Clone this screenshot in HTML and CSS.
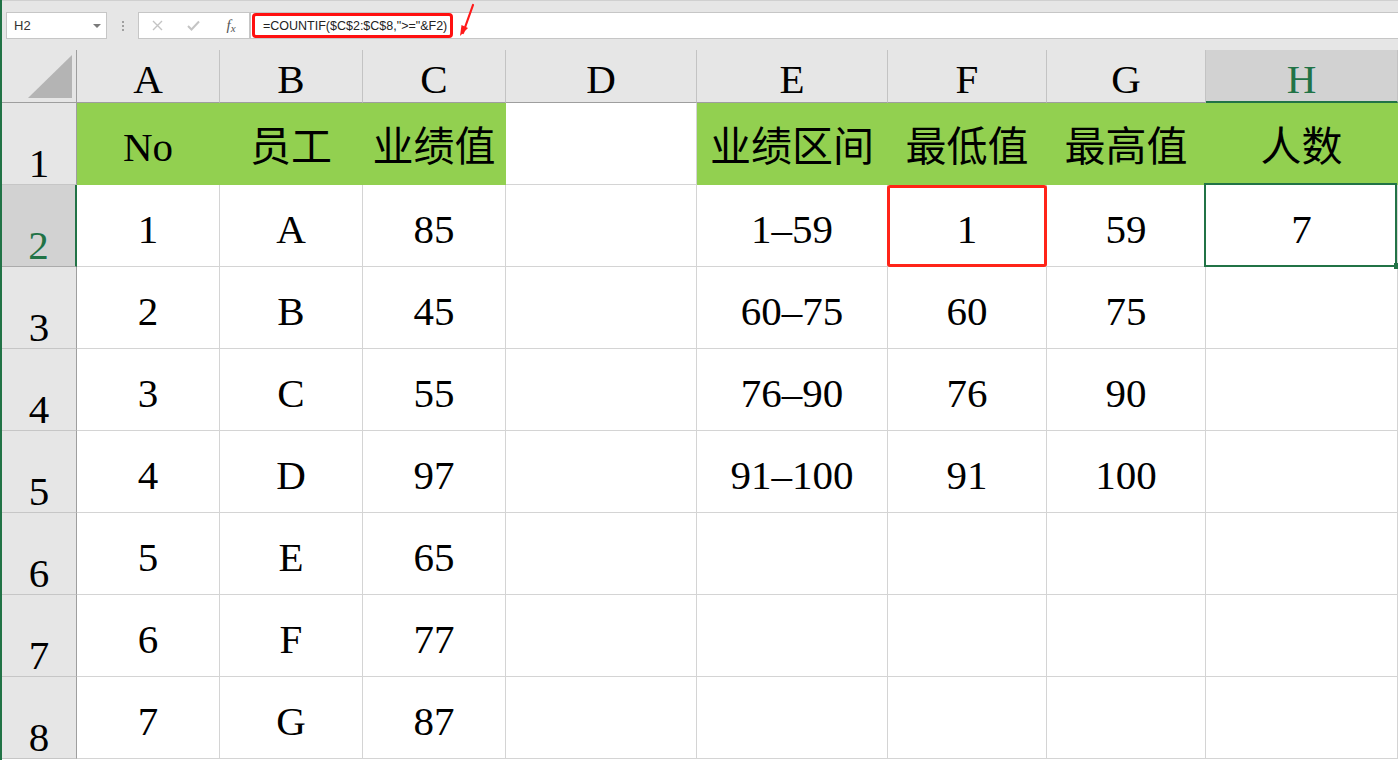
FILE: index.html
```html
<!DOCTYPE html>
<html lang="zh-CN">
<head>
    <meta charset="UTF-8">
    <title>COUNTIF 统计</title>
    <link rel="stylesheet" href="styles.css">
</head>
<body>
<div class="window">

    <div class="toolbar">
        <div class="namebox">H2<span class="caret"></span></div>
        <div class="grip"><i></i><i></i><i></i></div>
        <div class="fbtns">
            <span class="fbtn">
                <svg width="11" height="11" viewBox="0 0 11 11"><path d="M1 1 L10 10 M10 1 L1 10" stroke="#c4c4c4" stroke-width="1.4" fill="none"/></svg>
            </span>
            <span class="fbtn">
                <svg width="13" height="11" viewBox="0 0 13 11"><path d="M1 6 L4.5 9.5 L12 1.5" stroke="#c4c4c4" stroke-width="2" fill="none"/></svg>
            </span>
            <span class="fbtn fx"><i>f</i><i class="sub">x</i></span>
        </div>
        <div class="fbar">
            <span class="formula">=COUNTIF($C$2:$C$8,"&gt;="&amp;F2)</span>
        </div>
        <svg class="arrow" width="22" height="36" viewBox="0 0 22 36">
            <path d="M15 2 L5 30" stroke="#ff1a1a" stroke-width="2.2" fill="none" stroke-linecap="round"/>
            <path d="M2 33 L3.5 22 L10 25 Z" fill="#ff1a1a"/>
        </svg>
    </div>

    <div class="sheet">
        <!-- column headers -->
        <div class="corner"><div class="tri"></div></div>
        <div class="ch">A</div>
        <div class="ch">B</div>
        <div class="ch">C</div>
        <div class="ch">D</div>
        <div class="ch">E</div>
        <div class="ch">F</div>
        <div class="ch">G</div>
        <div class="ch sel">H</div>

        <!-- row 1 -->
        <div class="rh">1</div>
        <div class="c fill">No</div>
        <div class="c fill">员工</div>
        <div class="c fill">业绩值</div>
        <div class="c"></div>
        <div class="c fill">业绩区间</div>
        <div class="c fill">最低值</div>
        <div class="c fill">最高值</div>
        <div class="c fill">人数</div>

        <!-- row 2 -->
        <div class="rh sel">2</div>
        <div class="c">1</div>
        <div class="c">A</div>
        <div class="c">85</div>
        <div class="c"></div>
        <div class="c">1–59</div>
        <div class="c mark">1</div>
        <div class="c">59</div>
        <div class="c active">7</div>

        <!-- row 3 -->
        <div class="rh">3</div>
        <div class="c">2</div>
        <div class="c">B</div>
        <div class="c">45</div>
        <div class="c"></div>
        <div class="c">60–75</div>
        <div class="c">60</div>
        <div class="c">75</div>
        <div class="c"></div>

        <!-- row 4 -->
        <div class="rh">4</div>
        <div class="c">3</div>
        <div class="c">C</div>
        <div class="c">55</div>
        <div class="c"></div>
        <div class="c">76–90</div>
        <div class="c">76</div>
        <div class="c">90</div>
        <div class="c"></div>

        <!-- row 5 -->
        <div class="rh">5</div>
        <div class="c">4</div>
        <div class="c">D</div>
        <div class="c">97</div>
        <div class="c"></div>
        <div class="c">91–100</div>
        <div class="c">91</div>
        <div class="c">100</div>
        <div class="c"></div>

        <!-- row 6 -->
        <div class="rh">6</div>
        <div class="c">5</div>
        <div class="c">E</div>
        <div class="c">65</div>
        <div class="c"></div>
        <div class="c"></div>
        <div class="c"></div>
        <div class="c"></div>
        <div class="c"></div>

        <!-- row 7 -->
        <div class="rh">7</div>
        <div class="c">6</div>
        <div class="c">F</div>
        <div class="c">77</div>
        <div class="c"></div>
        <div class="c"></div>
        <div class="c"></div>
        <div class="c"></div>
        <div class="c"></div>

        <!-- row 8 -->
        <div class="rh">8</div>
        <div class="c">7</div>
        <div class="c">G</div>
        <div class="c">87</div>
        <div class="c"></div>
        <div class="c"></div>
        <div class="c"></div>
        <div class="c"></div>
        <div class="c"></div>
    </div>

</div>
</body>
</html>
```

FILE: styles.css
```css
:root {
    --excel-green: #217346;
    --fill: #92d050;
    --grid: #d4d4d4;
    --head-bg: #e6e6e6;
    --head-sel: #d2d2d2;
    --head-line: #9e9e9e;
}

body {
    margin: 0;
    background: #fff;
    overflow: hidden;
    font-family: "Liberation Serif", "Noto Sans CJK SC", serif;
    color: #000;
}

.window {
    height: 760px;
    border-left: 2px solid var(--excel-green);
    box-sizing: border-box;
    overflow: hidden;
}

/* formula bar */
.toolbar {
    position: relative;
    height: 50px;
    box-sizing: border-box;
    background: var(--head-bg);
    border-top: 1px solid #d0d0d0;
    padding: 11px 0 0 4px;
    display: flex;
    align-items: flex-start;
    font-family: "Liberation Sans", "Noto Sans CJK SC", sans-serif;
}

.namebox {
    width: 101px;
    height: 27px;
    box-sizing: border-box;
    background: #fff;
    border: 1px solid #c6c6c6;
    display: flex;
    align-items: center;
    padding: 0 5px 0 7px;
    font-size: 13px;
    color: #333;
}

.caret {
    margin-left: auto;
    border-left: 4px solid transparent;
    border-right: 4px solid transparent;
    border-top: 4px solid #7a7a7a;
}

.grip {
    width: 31px;
    height: 27px;
    display: flex;
    flex-direction: column;
    align-items: center;
    justify-content: center;
    gap: 2px;
}

.grip i {
    width: 2px;
    height: 2px;
    background: #a0a0a0;
}

.fbtns {
    width: 112px;
    height: 27px;
    box-sizing: border-box;
    background: #fff;
    border: 1px solid #c6c6c6;
    display: flex;
}

.fbtn {
    width: 36px;
    display: flex;
    align-items: center;
    justify-content: center;
}

.fx {
    font-family: "Liberation Serif", serif;
    font-size: 15px;
    color: #555;
    padding-left: 2px;
}

.fx .sub {
    font-size: 11px;
    margin-top: 5px;
}

.fbar {
    flex: 1;
    height: 27px;
    box-sizing: border-box;
    background: #fff;
    border: 1px solid #c6c6c6;
    border-right: none;
}

.formula {
    display: inline-flex;
    align-items: center;
    height: 25px;
    box-sizing: border-box;
    margin-left: 1px;
    padding: 0 3px 0 8px;
    border: 3px solid #ff1010;
    border-radius: 4px;
    font-size: 12.5px;
    color: #222;
}

.arrow {
    position: absolute;
    left: 456px;
    top: 2px;
}

/* grid */
.sheet {
    display: grid;
    grid-template-columns: 75px 143px 143px 143px 191px 191px 159px 159px 1fr;
    grid-template-rows: 53px;
    grid-auto-rows: 82px;
}

.corner,
.ch,
.rh,
.c {
    box-sizing: border-box;
    display: flex;
    justify-content: center;
    align-items: flex-end;
    font-size: 41px;
    line-height: 1;
}

.corner {
    background: var(--head-bg);
    border-right: 1px solid var(--head-line);
    border-bottom: 1px solid var(--head-line);
    justify-content: flex-end;
    padding: 0 4px 4px 0;
}

.tri {
    width: 44px;
    height: 43px;
    background: #b4b4b4;
    clip-path: polygon(100% 0, 100% 100%, 0 100%);
}

.ch {
    background: var(--head-bg);
    border-right: 1px solid #c3c3c3;
    border-bottom: 1px solid var(--head-line);
    padding-bottom: 2px;
}

.ch.sel {
    background: var(--head-sel);
    color: var(--excel-green);
    border-bottom: 2px solid var(--excel-green);
    padding-bottom: 1px;
}

.rh {
    background: var(--head-bg);
    border-right: 1px solid var(--head-line);
    border-bottom: 1px solid #c6c6c6;
}

.rh.sel {
    background: var(--head-sel);
    color: var(--excel-green);
    border-right: 2px solid var(--excel-green);
    border-bottom-color: #ababab;
}

.c {
    position: relative;
    border-right: 1px solid var(--grid);
    border-bottom: 1px solid var(--grid);
    padding-bottom: 16px;
}

.c.fill {
    background: var(--fill);
    border-color: var(--fill);
}

.c.mark::after {
    content: "";
    position: absolute;
    top: 0;
    left: -1px;
    right: -1px;
    bottom: -1px;
    border: 3px solid #ff2418;
    border-radius: 3px;
}

.c.active::after {
    content: "";
    position: absolute;
    top: -2px;
    left: -2px;
    right: 0;
    bottom: -1px;
    border: 2px solid var(--excel-green);
}

.c.active::before {
    content: "";
    position: absolute;
    right: -3px;
    bottom: -3px;
    width: 6px;
    height: 6px;
    background: var(--excel-green);
    z-index: 1;
}
```
